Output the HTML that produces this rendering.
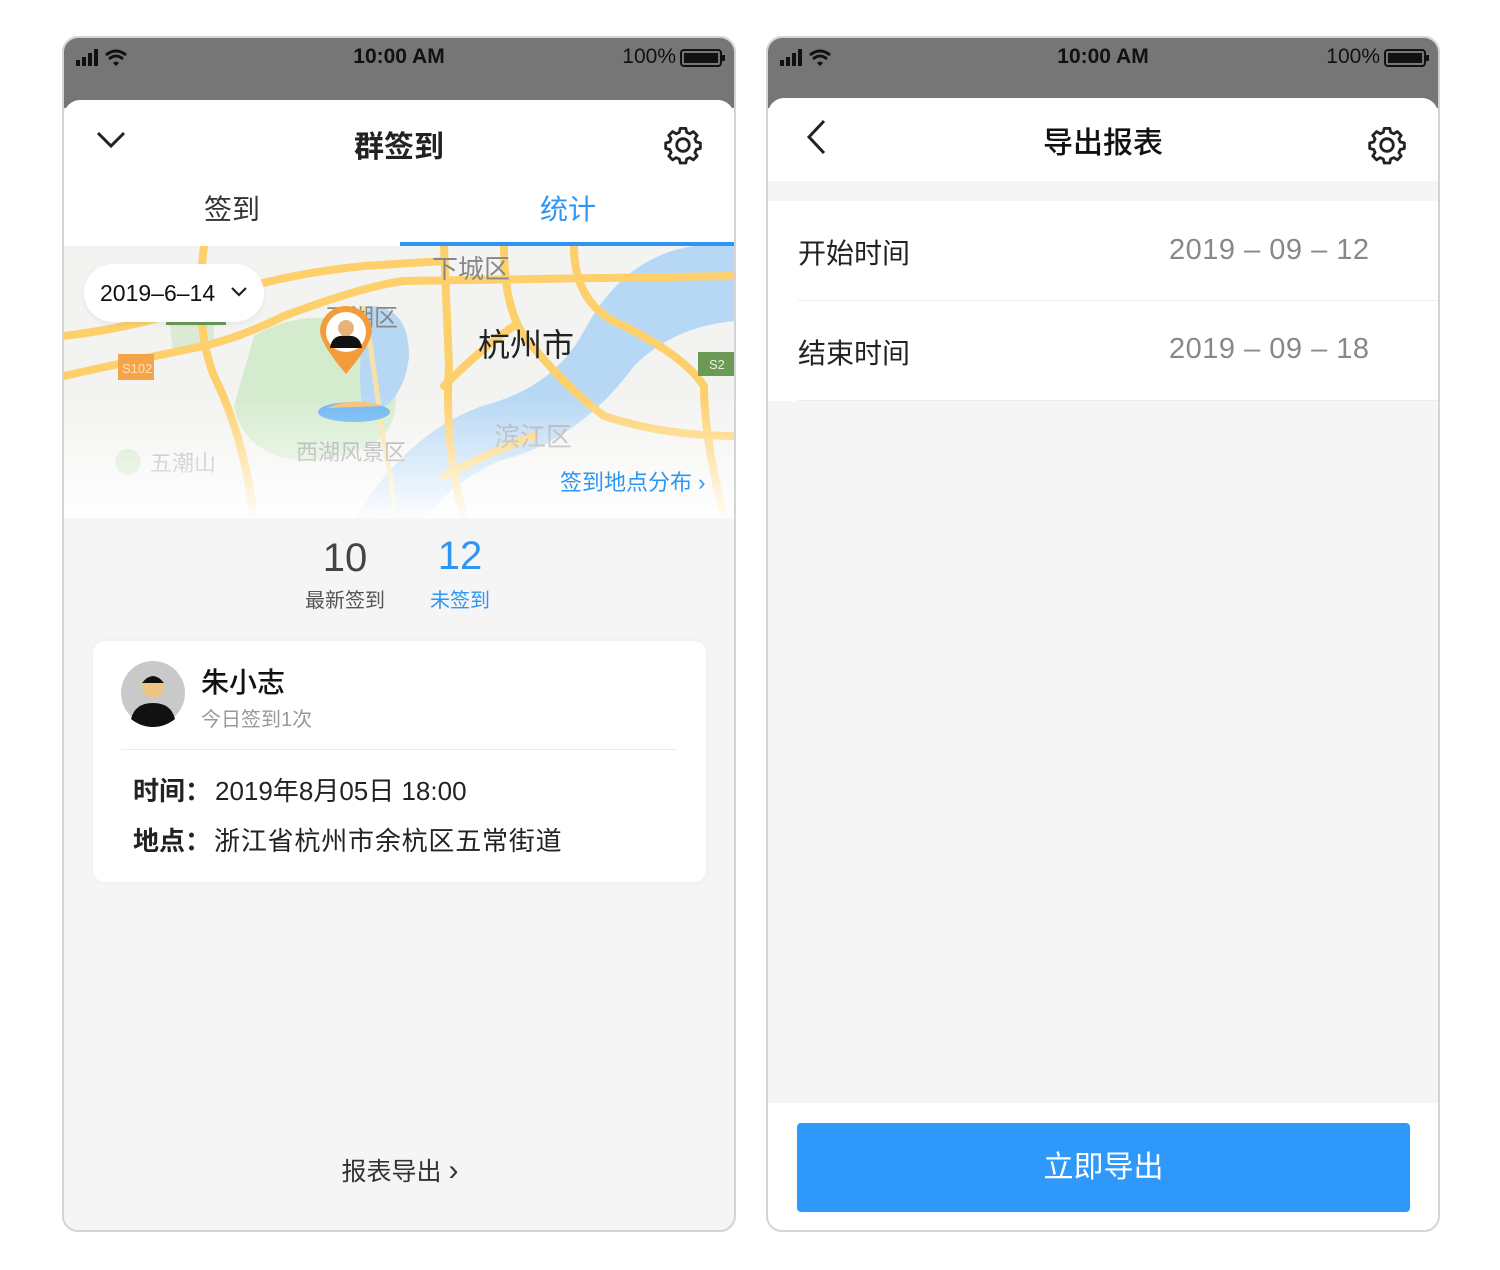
<!DOCTYPE html>
<html><head><meta charset="utf-8">
<style>
*{margin:0;padding:0;box-sizing:border-box}
body{width:1500px;height:1270px;background:#fff;font-family:"Liberation Sans","Noto Sans CJK SC",sans-serif;position:relative;overflow:hidden;color:#222}
.abs{position:absolute}
.phone{position:absolute;top:36px;width:674px;height:1196px;border:2px solid #d4d4d4;border-radius:16px;background:#f5f5f5;overflow:hidden}
.sb{position:absolute;left:0;top:0;width:100%;height:70px;background:#767676}
.sb .t{position:absolute;top:7px;left:0;width:100%;text-align:center;font-size:21px;font-weight:bold;color:#111}
.sb .p{position:absolute;top:7px;right:58px;font-size:21px;color:#111}
.head{position:absolute;left:0;top:62px;width:100%;background:#fff;border-radius:16px 16px 0 0}
.c{text-align:center}
</style></head><body>

<!-- LEFT PHONE -->
<div class="phone" style="left:62px">
  <div class="sb">
    <svg class="abs" style="left:12px;top:10px" width="60" height="20"><rect x="0" y="12" width="4" height="6" fill="#111"/><rect x="6" y="9" width="4" height="9" fill="#111"/><rect x="12" y="5" width="4" height="13" fill="#111"/><rect x="18" y="1" width="4" height="17" fill="#111"/>
    <path d="M30 7 Q40 -1 50 7" stroke="#111" stroke-width="3" fill="none"/><path d="M33 11 Q40 5 47 11" stroke="#111" stroke-width="3" fill="none"/><path d="M37 15 L40 18 L43 15 Q40 12 37 15Z" fill="#111"/></svg>
    <div class="t">10:00 AM</div>
    <div class="p">100%</div>
    <svg class="abs" style="right:8px;top:10px" width="46" height="20"><rect x="1" y="2" width="40" height="16" rx="3" fill="none" stroke="#111" stroke-width="2"/><rect x="4" y="5" width="34" height="10" fill="#111"/><rect x="42" y="7" width="3" height="6" fill="#111"/></svg>
  </div>
  <div class="head" style="height:146px">
    <svg class="abs" style="left:32px;top:30px" width="30" height="20"><path d="M2 3 L15 16 L28 3" stroke="#222" stroke-width="3" fill="none"/></svg>
    <div class="abs c" style="left:0;width:100%;top:22px;font-size:30px;font-weight:bold">群签到</div>
    <svg class="abs" style="left:598px;top:24px" width="42" height="42" viewBox="0 0 24 24"><path d="M12 2.5l1.6 0 .5 2.3 1.8.8 2-1.3 2.2 2.2-1.3 2 .8 1.8 2.3.5v3.2l-2.3.5-.8 1.8 1.3 2-2.2 2.2-2-1.3-1.8.8-.5 2.3h-3.2l-.5-2.3-1.8-.8-2 1.3-2.2-2.2 1.3-2-.8-1.8-2.3-.5v-3.2l2.3-.5.8-1.8-1.3-2 2.2-2.2 2 1.3 1.8-.8.5-2.3z" fill="none" stroke="#222" stroke-width="1.6" stroke-linejoin="round"/><circle cx="12" cy="12" r="3.6" fill="none" stroke="#222" stroke-width="1.6"/></svg>
    <div class="abs c" style="left:0;width:336px;top:88px;font-size:28px;color:#333">签到</div>
    <div class="abs c" style="left:336px;width:336px;top:88px;font-size:28px;color:#2d96f5">统计</div>
    <div class="abs" style="left:336px;width:336px;top:142px;height:4px;background:#2d96f5"></div>
  </div>
  <!-- map -->
  <svg class="abs" style="left:0;top:208px" width="672" height="272">
    <defs><linearGradient id="fade" x1="0" y1="0" x2="0" y2="1"><stop offset="0.55" stop-color="#fff" stop-opacity="0"/><stop offset="1" stop-color="#fff" stop-opacity="0.95"/></linearGradient></defs>
    <rect width="672" height="272" fill="#f3f3f1"/>
    <path d="M190 90 Q240 60 300 80 Q340 120 330 170 Q320 210 240 215 Q180 210 170 160 Z" fill="#d4ebcd"/>
    <path d="M100 40 L150 40 L150 100 L110 110 Z" fill="#dbe9d5"/>
    <path d="M305 60 Q345 60 345 110 Q340 160 300 170 Q290 120 305 60Z" fill="#b7d8f5"/>
    <path d="M672 0 L672 75 Q610 80 570 120 Q515 195 435 215 Q390 235 360 272 L290 272 Q350 180 425 158 Q490 140 520 85 Q560 10 630 0Z" fill="#b7d8f5"/>
    <g stroke="#fdd06c" stroke-width="8" fill="none" stroke-linecap="round">
      <path d="M0 130 Q90 110 140 100 Q180 90 220 70 Q300 40 340 35 L672 30"/>
      <path d="M140 0 Q130 80 150 130 Q180 190 190 272"/>
      <path d="M380 0 L385 120 Q380 200 400 272"/>
      <path d="M440 0 Q440 60 460 90 Q500 140 540 170 Q600 190 672 190"/>
      <path d="M510 0 Q510 60 560 80 Q620 110 640 140 Q640 190 660 272"/>
      <path d="M0 90 Q80 80 130 60 Q200 30 300 20 L380 15"/>
      <path d="M380 140 Q420 100 450 80"/>
      <path d="M380 230 Q440 200 470 190"/>
    </g>
    <path d="M300 60 Q310 120 320 200 Q330 240 330 272" stroke="#f5e3a6" stroke-width="5" fill="none"/>
    <ellipse cx="290" cy="166" rx="36" ry="10" fill="#6ab4f2"/><path d="M262 162 Q290 150 320 160" fill="#f2c17c"/>
    <rect x="54" y="108" width="36" height="26" fill="#f5a44a"/><text x="58" y="127" font-size="13" fill="#fde2b4">S102</text>
    <rect x="634" y="106" width="36" height="24" fill="#6b9a55"/><text x="645" y="123" font-size="13" fill="#e6f0df">S2</text>
    <rect x="102" y="58" width="60" height="20" fill="#eee"/><rect x="102" y="76" width="60" height="3" fill="#6b9a55"/>
    <text x="368" y="32" font-size="26" fill="#888">下城区</text>
    <text x="262" y="80" font-size="24" fill="#888">西湖区</text>
    <text x="414" y="110" font-size="32" fill="#222">杭州市</text>
    <text x="430" y="200" font-size="26" fill="#aaa">滨江区</text>
    <text x="232" y="214" font-size="22" fill="#999">西湖风景区</text>
    <circle cx="64" cy="216" r="13" fill="#cfe6c5"/><text x="86" y="225" font-size="22" fill="#aaa">五潮山</text>
    <path d="M282 128 Q258 100 256 86 A26 26 0 1 1 308 86 Q306 100 282 128Z" fill="#f59c3a"/>
    <circle cx="282" cy="86" r="20" fill="#fff"/><circle cx="282" cy="82" r="8" fill="#e8b27a"/><path d="M266 102 Q268 88 282 90 Q296 88 298 102Z" fill="#111"/>
    <rect width="672" height="272" fill="url(#fade)"/>
    <text x="496" y="244" font-size="22" fill="#2d96f5">签到地点分布 ›</text>
  </svg>
  <div class="abs" style="left:20px;top:226px;width:180px;height:58px;background:#fff;border-radius:29px;box-shadow:0 2px 6px rgba(0,0,0,.06);font-size:23px;line-height:58px;padding-left:16px;color:#111">2019–6–14
    <svg style="position:absolute;left:146px;top:22px" width="18" height="12"><path d="M2 2 L9 9 L16 2" stroke="#222" stroke-width="2.2" fill="none"/></svg></div>
  <!-- stats -->
  <div class="abs c" style="left:221px;width:120px;top:498px;font-size:40px;color:#444">10</div>
  <div class="abs c" style="left:221px;width:120px;top:546px;font-size:20px;color:#555">最新签到</div>
  <div class="abs c" style="left:336px;width:120px;top:496px;font-size:40px;color:#2d96f5">12</div>
  <div class="abs c" style="left:336px;width:120px;top:546px;font-size:20px;color:#2d96f5">未签到</div>
  <!-- card -->
  <div class="abs" style="left:29px;top:603px;width:613px;height:241px;background:#fff;border-radius:12px;box-shadow:0 0 6px rgba(0,0,0,.04)">
    <svg class="abs" style="left:28px;top:20px" width="64" height="66"><circle cx="32" cy="32" r="32" fill="#c9c9c9"/><circle cx="32" cy="26" r="11" fill="#eec684"/><path d="M21 22 Q32 8 43 22" fill="#111"/><path d="M10 58 Q14 42 32 42 Q50 42 54 58 Q44 66 32 66 Q20 66 10 58Z" fill="#111"/></svg>
    <div class="abs" style="left:108px;top:20px;font-size:28px;color:#111;font-weight:500">朱小志</div>
    <div class="abs" style="left:108px;top:62px;font-size:20px;color:#999">今日签到1次</div>
    <div class="abs" style="left:28px;top:108px;width:556px;height:1px;background:#e8eee6"></div>
    <div class="abs" style="left:40px;top:130px;font-size:26px;color:#222;white-space:nowrap"><b>时间：</b><span style="margin-left:4px">2019年8月05日 18:00</span></div>
    <div class="abs" style="left:40px;top:180px;font-size:26px;color:#222;white-space:nowrap"><b>地点：</b><span style="letter-spacing:0.8px;margin-left:3px">浙江省杭州市余杭区五常街道</span></div>
  </div>
  <div class="abs c" style="left:0;width:672px;top:1114px;font-size:25px;color:#333">报表导出 <span style="font-size:30px;line-height:20px">›</span></div>
</div>

<!-- RIGHT PHONE -->
<div class="phone" style="left:766px">
  <div class="sb">
    <svg class="abs" style="left:12px;top:10px" width="60" height="20"><rect x="0" y="12" width="4" height="6" fill="#111"/><rect x="6" y="9" width="4" height="9" fill="#111"/><rect x="12" y="5" width="4" height="13" fill="#111"/><rect x="18" y="1" width="4" height="17" fill="#111"/>
    <path d="M30 7 Q40 -1 50 7" stroke="#111" stroke-width="3" fill="none"/><path d="M33 11 Q40 5 47 11" stroke="#111" stroke-width="3" fill="none"/><path d="M37 15 L40 18 L43 15 Q40 12 37 15Z" fill="#111"/></svg>
    <div class="t">10:00 AM</div>
    <div class="p">100%</div>
    <svg class="abs" style="right:8px;top:10px" width="46" height="20"><rect x="1" y="2" width="40" height="16" rx="3" fill="none" stroke="#111" stroke-width="2"/><rect x="4" y="5" width="34" height="10" fill="#111"/><rect x="42" y="7" width="3" height="6" fill="#111"/></svg>
  </div>
  <div class="head" style="top:60px;height:83px">
    <svg class="abs" style="left:36px;top:20px" width="24" height="38"><path d="M20 3 L5 19 L20 35" stroke="#222" stroke-width="3" fill="none"/></svg>
    <div class="abs c" style="left:0;width:100%;top:20px;font-size:30px;font-weight:500;color:#111">导出报表</div>
    <svg class="abs" style="left:598px;top:26px" width="42" height="42" viewBox="0 0 24 24"><path d="M12 2.5l1.6 0 .5 2.3 1.8.8 2-1.3 2.2 2.2-1.3 2 .8 1.8 2.3.5v3.2l-2.3.5-.8 1.8 1.3 2-2.2 2.2-2-1.3-1.8.8-.5 2.3h-3.2l-.5-2.3-1.8-.8-2 1.3-2.2-2.2 1.3-2-.8-1.8-2.3-.5v-3.2l2.3-.5.8-1.8-1.3-2 2.2-2.2 2 1.3 1.8-.8.5-2.3z" fill="none" stroke="#222" stroke-width="1.6" stroke-linejoin="round"/><circle cx="12" cy="12" r="3.6" fill="none" stroke="#222" stroke-width="1.6"/></svg>
  </div>
  <div class="abs" style="left:0;top:163px;width:672px;height:200px;background:#fff"></div>
  <div class="abs" style="left:30px;top:262px;width:642px;height:1px;background:#eee"></div>
  <div class="abs" style="left:30px;top:362px;width:642px;height:1px;background:#e8f0e6"></div>
  <div class="abs" style="left:30px;top:194px;font-size:28px;color:#222">开始时间</div>
  <div class="abs" style="left:401px;top:196px;font-size:29px;color:#888;white-space:nowrap;letter-spacing:0.5px">2019 – 09 – 12</div>
  <div class="abs" style="left:30px;top:294px;font-size:28px;color:#222">结束时间</div>
  <div class="abs" style="left:401px;top:295px;font-size:29px;color:#888;white-space:nowrap;letter-spacing:0.5px">2019 – 09 – 18</div>
  <div class="abs" style="left:0;top:1065px;width:672px;height:140px;background:#fff"></div>
  <div class="abs c" style="left:29px;top:1085px;width:613px;height:89px;background:#2f98fb;border-radius:4px;color:#fff;font-size:30px;line-height:89px">立即导出</div>
</div>
</body></html>
